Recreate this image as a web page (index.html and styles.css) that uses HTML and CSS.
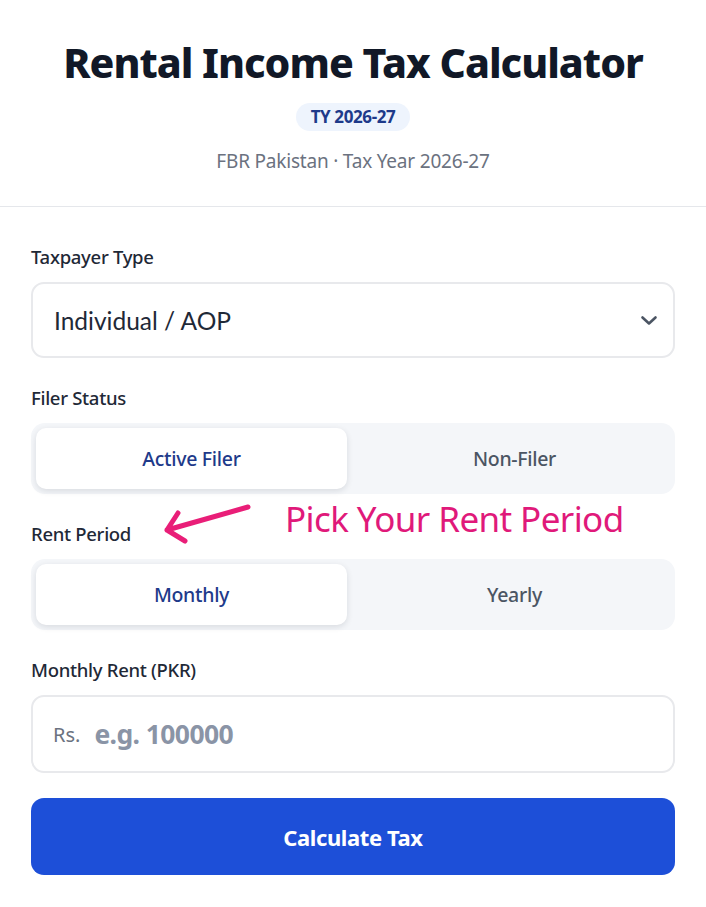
FILE: index.html
```html
<!DOCTYPE html>
<html lang="en">
<head>
<meta charset="utf-8">
<title>Rental Income Tax Calculator</title>
<link rel="stylesheet" href="styles.css">
</head>
<body>
<div class="page">
  <header class="hero">
    <h1 class="title">Rental Income Tax Calculator</h1>
    <span class="badge">TY 2026-27</span>
    <p class="subtitle">FBR Pakistan · Tax Year 2026-27</p>
  </header>
  <main class="form">
    <div class="field">
      <label class="label">Taxpayer Type</label>
      <div class="select">
        <span class="select-text">Individual / AOP</span>
        <svg class="chevron" width="18" height="11" viewBox="0 0 18 11"><path d="M2.5 2.5 L9 8.5 L15.5 2.5" fill="none" stroke="#4b5563" stroke-width="2.6" stroke-linecap="round" stroke-linejoin="round"/></svg>
      </div>
    </div>
    <div class="field">
      <label class="label">Filer Status</label>
      <div class="segmented">
        <button class="seg active">Active Filer</button>
        <button class="seg">Non-Filer</button>
      </div>
    </div>
    <div class="field">
      <div class="label-row">
        <label class="label">Rent Period</label>
        <svg class="arrow" width="110" height="60" viewBox="0 0 110 60"><path d="M98 15 L17 38 M28 21 L17 38 L35 49" fill="none" stroke="#e91e78" stroke-width="5" stroke-linecap="round" stroke-linejoin="round"/></svg>
        <span class="annot">Pick Your Rent Period</span>
      </div>
      <div class="segmented">
        <button class="seg active">Monthly</button>
        <button class="seg">Yearly</button>
      </div>
    </div>
    <div class="field">
      <label class="label">Monthly Rent (PKR)</label>
      <div class="input">
        <span class="prefix">Rs.</span>
        <span class="placeholder">e.g. 100000</span>
      </div>
    </div>
    <button class="submit">Calculate Tax</button>
  </main>
</div>
</body>
</html>
```
FILE: styles.css
```css
* { box-sizing: border-box; }
html, body { margin: 0; padding: 0; background: #ffffff; }
body { font-family: "Noto Sans", "Open Sans", sans-serif; color: #1f2937; }
.page { width: 706px; }
.hero {
  display: flex; flex-direction: column; align-items: center;
  padding: 37px 0 0; height: 207px;
  border-bottom: 1.5px solid #e5e7eb;
}
.title {
  margin: 0; font-size: 41px; font-weight: 800; color: #111827;
  letter-spacing: -1px; line-height: 50px;
}
.badge {
  margin-top: 16px; background: #eef4fd; color: #1e3a8a;
  font-size: 17px; font-weight: 700; padding: 3px 15px; border-radius: 14px;
  line-height: 22px; letter-spacing: -0.4px;
}
.subtitle {
  margin: 17px 0 0; font-size: 19px; color: #6b7280; letter-spacing: -0.2px; line-height: 26px;
}
.form { padding: 38px 31px 0; display: flex; flex-direction: column; }
.field { display: flex; flex-direction: column; margin-bottom: 28px; }
.label {
  display: block; font-size: 18.5px; font-weight: 500; color: #1f2937;
  line-height: 24px; margin-bottom: 13px; letter-spacing: -0.3px;
}
.select {
  height: 76px; border: 2px solid #e8e9ec; border-radius: 13px;
  display: flex; align-items: center; justify-content: space-between;
  padding: 0 15px 0 21px;
}
.select-text { font-family: "Lato", "Noto Sans", sans-serif; font-size: 24.5px; color: #1f2937; }
.segmented {
  height: 71px; background: #f4f6f9; border-radius: 14px; padding: 5px;
  display: flex; gap: 12px;
}
.seg {
  flex: 1; border: 0; background: transparent; font-family: inherit;
  font-size: 19.5px; font-weight: 500; color: #4b5563; border-radius: 10px; letter-spacing: -0.3px;
}
.seg.active { background: #ffffff; color: #1e3a8a; box-shadow: 0 2px 6px rgba(15, 23, 42, 0.12); }
.label-row { position: relative; }
.arrow { position: absolute; left: 119px; top: -30px; }
.annot {
  position: absolute; left: 254px; top: -25px; font-size: 35px; color: #e0197a; letter-spacing: -0.6px;
  line-height: 44px; white-space: nowrap;
}
.input {
  height: 78px; border: 2px solid #e8e9ec; border-radius: 13px;
  display: flex; align-items: center; padding: 0 20px;
}
.prefix { font-size: 20px; color: #6b7280; margin-right: 14px; }
.placeholder { font-size: 26.5px; font-weight: 700; color: #8a94a6; letter-spacing: -0.6px; }
.submit {
  height: 77px; border: 0; border-radius: 13px; background: #1d4fd8; color: #ffffff;
  font-family: inherit; font-size: 22px; font-weight: 700; letter-spacing: -0.4px;
  margin-top: -3px;
}
```
